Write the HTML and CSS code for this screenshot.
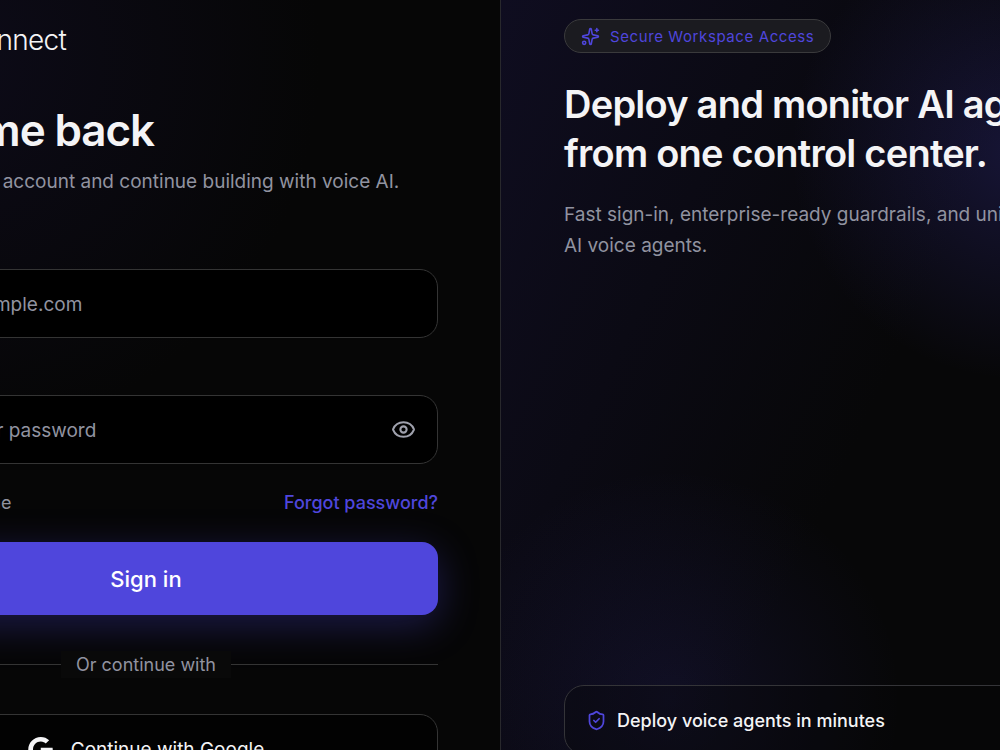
FILE: index.html
```html
<!DOCTYPE html>
<html lang="en">
<head>
    <meta charset="UTF-8">
    <meta name="viewport" content="width=device-width, initial-scale=1.0">
    <title>Sign in</title>
    <link rel="stylesheet" href="styles.css">
</head>
<body>
    <div class="auth-page">
        <main class="auth-panel">
            <div class="auth-content">
                <div class="brand"><span class="brand-mark"></span>VoiceConnect</div>
                <h1 class="auth-title">Welcome back</h1>
                <p class="auth-subtitle">Log in with your account and continue building with voice AI.</p>

                <form class="auth-form">
                    <label class="form-label" for="email">Email</label>
                    <input class="form-input" type="email" id="email" placeholder="you@example.com">

                    <label class="form-label" for="password">Password</label>
                    <div class="password-field">
                        <input class="form-input" type="password" id="password" placeholder="Enter your password">
                        <button type="button" class="toggle-btn" aria-label="Show password">
                            <svg class="icon" viewBox="0 0 24 24">
                                <path d="M2.062 12.348a1 1 0 0 1 0-.696 10.75 10.75 0 0 1 19.876 0 1 1 0 0 1 0 .696 10.75 10.75 0 0 1-19.876 0"/>
                                <circle cx="12" cy="12" r="3"/>
                            </svg>
                        </button>
                    </div>

                    <div class="form-row">
                        <label class="remember"><input type="checkbox"> Remember me</label>
                        <a class="forgot-link" href="#">Forgot password?</a>
                    </div>

                    <button type="submit" class="submit-btn">Sign in</button>
                </form>

                <div class="divider"><span>Or continue with</span></div>

                <button type="button" class="google-btn">
                    <svg class="google-icon" viewBox="0 0 24 24">
                        <path d="M12.24 10.285V14.4h6.806c-.275 1.765-2.056 5.174-6.806 5.174-4.095 0-7.439-3.389-7.439-7.574s3.345-7.574 7.439-7.574c2.33 0 3.891.989 4.785 1.849l3.254-3.138C18.189 1.186 15.479 0 12.24 0c-6.635 0-12 5.365-12 12s5.365 12 12 12c6.926 0 11.52-4.869 11.52-11.726 0-.788-.085-1.39-.189-1.989H12.24z"/>
                    </svg>
                    Continue with Google
                </button>
            </div>
        </main>

        <aside class="promo-panel">
            <div class="promo-content">
                <div class="badge">
                    <svg class="icon" viewBox="0 0 24 24">
                        <path d="M11.017 2.814a1 1 0 0 1 1.966 0l1.051 5.558a2 2 0 0 0 1.594 1.594l5.558 1.051a1 1 0 0 1 0 1.966l-5.558 1.051a2 2 0 0 0-1.594 1.594l-1.051 5.558a1 1 0 0 1-1.966 0l-1.051-5.558a2 2 0 0 0-1.594-1.594l-5.558-1.051a1 1 0 0 1 0-1.966l5.558-1.051a2 2 0 0 0 1.594-1.594z"/>
                        <path d="M20 2v4M22 4h-4"/>
                        <circle cx="4" cy="20" r="2"/>
                    </svg>
                    Secure Workspace Access
                </div>
                <h2 class="promo-title">Deploy and monitor AI agents<br>from one control center.</h2>
                <p class="promo-text">Fast sign-in, enterprise-ready guardrails, and unified tools for<br>AI voice agents.</p>
                <div class="feature-card">
                    <svg class="icon" viewBox="0 0 24 24">
                        <path d="M20 13c0 5-3.5 7.5-7.66 8.95a1 1 0 0 1-.67-.01C7.5 20.5 4 18 4 13V6a1 1 0 0 1 1-1c2 0 4.5-1.2 6.24-2.72a1.17 1.17 0 0 1 1.52 0C14.51 3.81 17 5 19 5a1 1 0 0 1 1 1z"/>
                        <path d="m9 12 2 2 4-4"/>
                    </svg>
                    Deploy voice agents in minutes
                </div>
            </div>
        </aside>
    </div>
</body>
</html>
```
FILE: styles.css
```css
* {
    box-sizing: border-box;
}
body {
    margin: 0;
    background: #060606;
    color: #f4f4f6;
    font-family: Inter, "Liberation Sans", sans-serif;
    font-size: 19px;
}
h1, h2, p {
    margin: 0;
}
button, input {
    font: inherit;
}
.icon {
    fill: none;
    stroke: currentColor;
    stroke-width: 2;
    stroke-linecap: round;
    stroke-linejoin: round;
    flex: none;
}
.auth-page {
    display: grid;
    grid-template-columns: 1fr 1fr;
    height: 100vh;
    overflow: hidden;
}

/* Sign in side */
.auth-panel {
    display: flex;
    justify-content: flex-end;
    min-width: 0;
    padding: 22px 62px 0 0;
    background: radial-gradient(circle at -60px 60px, #0d0b19 0, #060606 380px);
}
.auth-content {
    flex: none;
    width: 584px;
}
.brand {
    display: flex;
    align-items: center;
    gap: 10px;
    font-size: 28px;
    font-weight: 300;
    line-height: 36px;
    letter-spacing: -0.025em;
}
.brand-mark {
    width: 28px;
    height: 28px;
    background: #4f46dc;
    border-radius: 8px;
}
.auth-title {
    margin-top: 45px;
    font-size: 44px;
    font-weight: 600;
    line-height: 54px;
    letter-spacing: -0.025em;
}
.auth-subtitle {
    margin: 10px 0 39px;
    color: #9193a0;
    line-height: 30px;
}
.form-label {
    display: block;
    margin-bottom: 12px;
    font-size: 18px;
    font-weight: 500;
    line-height: 21px;
}
.form-input {
    display: block;
    width: 100%;
    height: 69px;
    margin-bottom: 24px;
    padding: 2px 56px 0;
    background: #000;
    border: 1px solid #343434;
    border-radius: 18px;
    color: #f4f4f6;
}
.form-input::placeholder {
    color: #9193a0;
    opacity: 1;
}
.password-field {
    position: relative;
}
.toggle-btn {
    position: absolute;
    top: 0;
    right: 22px;
    display: flex;
    align-items: center;
    height: 100%;
    padding: 0;
    background: none;
    border: none;
    color: #9fa1ad;
    cursor: pointer;
}
.toggle-btn .icon {
    width: 25px;
    height: 25px;
}
.form-row {
    display: flex;
    justify-content: space-between;
    margin-bottom: 24px;
    font-size: 18px;
    line-height: 30px;
}
.remember {
    display: flex;
    align-items: center;
    gap: 12px;
    color: #9193a0;
}
.remember input {
    width: 22px;
    height: 22px;
    margin: 0;
}
.forgot-link {
    color: #4f46dc;
    font-weight: 500;
    text-decoration: none;
}
.submit-btn {
    display: block;
    width: 100%;
    height: 73px;
    background: #4f46dc;
    border: none;
    border-radius: 16px;
    box-shadow: 0 10px 40px rgba(79, 70, 220, 0.32);
    color: #fff;
    font-size: 22px;
    font-weight: 500;
    cursor: pointer;
}
.divider {
    display: flex;
    align-items: center;
    margin: 36px 0;
    color: #9193a0;
    font-size: 18px;
    line-height: 27px;
}
.divider::before,
.divider::after {
    content: "";
    flex: 1;
    height: 1px;
    background: #343434;
}
.divider span {
    padding: 0 15px;
    background: #090909;
}
.google-btn {
    display: flex;
    align-items: center;
    justify-content: center;
    gap: 18px;
    width: 100%;
    height: 70px;
    background: #020202;
    border: 1px solid #343434;
    border-radius: 18px;
    color: #f4f4f6;
    cursor: pointer;
}
.google-icon {
    width: 25px;
    height: 25px;
    fill: currentColor;
}

/* Promo side */
.promo-panel {
    min-width: 0;
    padding: 19px 0 0 63px;
    overflow: hidden;
    border-left: 1px solid #28282c;
    background:
        radial-gradient(circle at 520px 150px, rgba(79, 70, 220, 0.22) 0, transparent 230px),
        radial-gradient(circle at 170px 700px, rgba(79, 70, 220, 0.12) 0, transparent 230px),
        linear-gradient(115deg, #0f0d20 0%, #070708 65%, #070708 100%);
}
.promo-content {
    width: 640px;
}
.badge {
    display: flex;
    align-items: center;
    gap: 10px;
    width: fit-content;
    height: 34px;
    padding: 0 16px;
    background: #1b1b20;
    border: 1px solid #3a3a3c;
    border-radius: 17px;
    color: #4f46dc;
    font-size: 15px;
    letter-spacing: 0.04em;
}
.badge .icon {
    width: 19px;
    height: 19px;
}
.promo-title {
    margin-top: 27px;
    font-size: 38px;
    font-weight: 600;
    line-height: 49px;
    letter-spacing: -0.02em;
}
.promo-text {
    margin-top: 21px;
    color: #9193a0;
    line-height: 31px;
}
.feature-card {
    display: flex;
    align-items: center;
    gap: 10px;
    height: 70px;
    margin-top: 424px;
    padding: 0 21px;
    background: rgba(5, 5, 5, 0.3);
    border: 1px solid #343438;
    border-radius: 20px;
    font-size: 18px;
    font-weight: 500;
}
.feature-card .icon {
    width: 21px;
    height: 21px;
    color: #4f46dc;
}
```
